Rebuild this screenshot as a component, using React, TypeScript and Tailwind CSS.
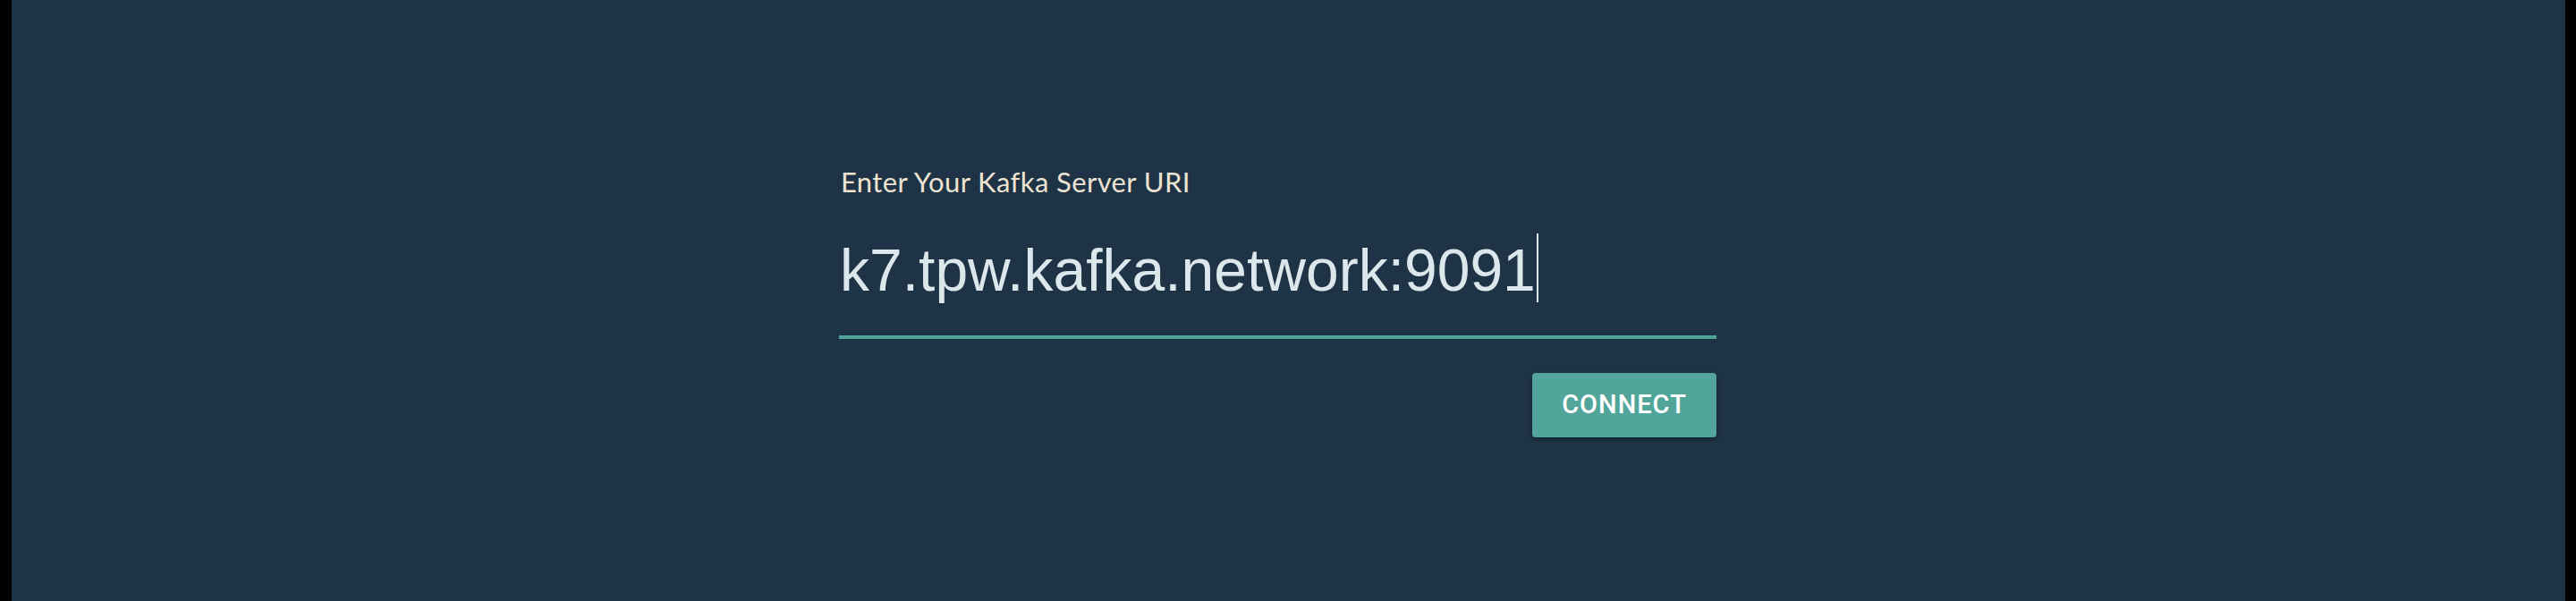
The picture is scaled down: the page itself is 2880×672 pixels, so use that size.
export default function App() {
  return (
    <div className="h-[672px] w-full bg-black pl-[13px] pr-[12px]">
      <div className="h-full bg-[#1e3345] pt-[185px]">
        <div className="ml-[925px] w-[981px] flex flex-col">
          <label
            className="text-[31px] leading-[37px] tracking-[0.4px] text-[#ede3d2] pl-[2px]"
            style={{ fontFamily: "Lato, sans-serif" }}
          >
            Enter Your Kafka Server URI
          </label>

          <div className="mt-[39px] flex items-start pl-[1px]">
            <span
              className="mt-[3px] text-[66px] leading-[77px] text-[#dce7ec]"
              style={{ fontFamily: "'Liberation Sans', Arial, sans-serif" }}
            >
              k7.tpw.kafka.network:9091
            </span>
            <span className="ml-[1px] h-[77px] w-[2px] bg-[#dce7ec]" />
          </div>

          <div className="mt-[34px] h-[4px] w-full bg-[#4fa49a]" />

          <div className="mt-[38px] flex justify-end">
            <button
              className="h-[72px] w-[206px] rounded-[4px] bg-[#52a59a] text-[29px] font-medium tracking-[1px] text-white shadow-[0_2px_4px_rgba(0,0,0,0.35)]"
              style={{ fontFamily: "Roboto, sans-serif" }}
            >
              CONNECT
            </button>
          </div>
        </div>
      </div>
    </div>
  );
}
